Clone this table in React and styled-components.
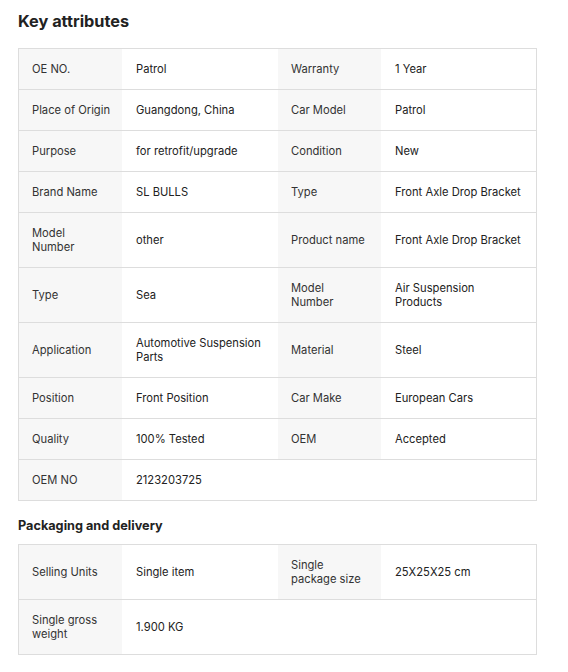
import React from 'react';
import styled, { createGlobalStyle } from 'styled-components';

const GlobalStyle = createGlobalStyle`
  body {
    margin: 0;
    background: #fff;
    font-family: Inter, "Noto Sans", sans-serif;
    color: #222;
  }
`;

const Page = styled.div`
  padding: 9px 0 0 18px;
  width: 519px;
`;

const Title = styled.h2`
  margin: 0 0 15px;
  font-size: 16.3px;
  line-height: 24px;
  font-weight: 700;
  color: #222;
`;

const SubTitle = styled.h3`
  margin: 16px 0 9px;
  font-size: 12.7px;
  line-height: 18px;
  font-weight: 700;
  color: #222;
`;

const Table = styled.div`
  border: 1px solid #ddd;
`;

const Row = styled.div`
  display: grid;
  grid-template-columns: 103px 156px 103px 1fr;
  & + & {
    border-top: 1px solid #ddd;
  }
`;

const Cell = styled.div`
  display: flex;
  align-items: center;
  padding: 13px ${p => (p.$label ? '11.8px' : '14px')} 13px ${p => (p.$label ? 13 : 14)}px;
  min-height: 14px;
  font-size: 11.2px;
  line-height: 14px;
  background: ${p => (p.$label ? '#f7f7f7' : '#fff')};
  color: ${p => (p.$label ? '#333' : '#222')};
`;

const attributes = [
  ['OE NO.', 'Patrol', 'Warranty', '1 Year'],
  ['Place of Origin', 'Guangdong, China', 'Car Model', 'Patrol'],
  ['Purpose', 'for retrofit/upgrade', 'Condition', 'New'],
  ['Brand Name', 'SL BULLS', 'Type', 'Front Axle Drop Bracket'],
  ['Model Number', 'other', 'Product name', 'Front Axle Drop Bracket'],
  ['Type', 'Sea', 'Model Number', 'Air Suspension Products'],
  ['Application', 'Automotive Suspension Parts', 'Material', 'Steel'],
  ['Position', 'Front Position', 'Car Make', 'European Cars'],
  ['Quality', '100% Tested', 'OEM', 'Accepted'],
  ['OEM NO', '2123203725'],
];

const packaging = [
  ['Selling Units', 'Single item', 'Single package size', '25X25X25 cm'],
  ['Single gross weight', '1.900 KG'],
];

function AttrTable({ rows }) {
  return (
    <Table>
      {rows.map((r, i) => (
        <Row key={i}>
          <Cell $label>{r[0]}</Cell>
          <Cell>{r[1]}</Cell>
          {r.length > 2 ? (
            <>
              <Cell $label>{r[2]}</Cell>
              <Cell>{r[3]}</Cell>
            </>
          ) : (
            <>
              <Cell />
              <Cell />
            </>
          )}
        </Row>
      ))}
    </Table>
  );
}

export default function App() {
  return (
    <>
      <GlobalStyle />
      <Page>
        <Title>Key attributes</Title>
        <AttrTable rows={attributes} />
        <SubTitle>Packaging and delivery</SubTitle>
        <AttrTable rows={packaging} />
      </Page>
    </>
  );
}
